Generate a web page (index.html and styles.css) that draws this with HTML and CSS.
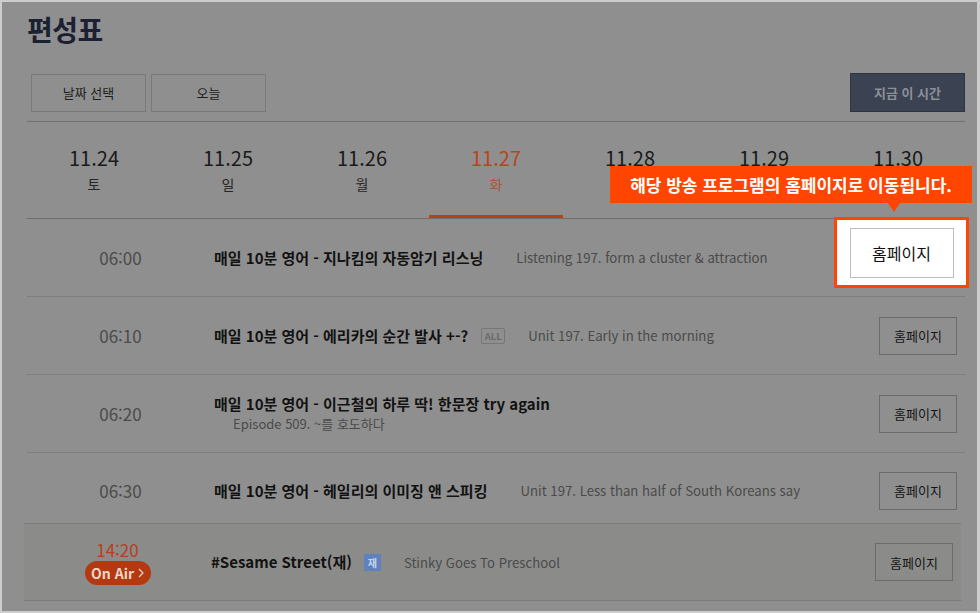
FILE: index.html
```html
<!DOCTYPE html>
<html lang="ko">
<head>
<meta charset="utf-8">
<title>편성표</title>
<link rel="stylesheet" href="styles.css">
</head>
<body>
<div class="frame">
  <div class="page">
    <h1 class="title">편성표</h1>
    <div class="toolbar">
      <div class="toolbar-left">
        <button class="tool-btn">날짜 선택</button>
        <button class="tool-btn">오늘</button>
      </div>
      <button class="now-btn">지금 이 시간</button>
    </div>
    <ul class="dates">
      <li class="date"><span class="date-num">11.24</span><span class="date-day">토</span></li>
      <li class="date"><span class="date-num">11.25</span><span class="date-day">일</span></li>
      <li class="date"><span class="date-num">11.26</span><span class="date-day">월</span></li>
      <li class="date active"><span class="date-num">11.27</span><span class="date-day">화</span></li>
      <li class="date"><span class="date-num">11.28</span><span class="date-day">수</span></li>
      <li class="date"><span class="date-num">11.29</span><span class="date-day">목</span></li>
      <li class="date"><span class="date-num">11.30</span><span class="date-day">금</span></li>
    </ul>
    <ul class="schedule">
      <li class="row">
        <div class="time">06:00</div>
        <div class="info">
          <div class="line"><strong class="prog">매일 10분 영어 - 지나킴의 자동암기 리스닝</strong><span class="desc">Listening 197. form a cluster &amp; attraction</span></div>
        </div>
        <button class="home-btn">홈페이지</button>
      </li>
      <li class="row">
        <div class="time">06:10</div>
        <div class="info">
          <div class="line"><strong class="prog">매일 10분 영어 - 에리카의 순간 발사 +-?</strong><span class="badge badge-all">ALL</span><span class="desc">Unit 197. Early in the morning</span></div>
        </div>
        <button class="home-btn">홈페이지</button>
      </li>
      <li class="row">
        <div class="time">06:20</div>
        <div class="info">
          <div class="line"><strong class="prog">매일 10분 영어 - 이근철의 하루 딱! 한문장 try again</strong></div>
          <div class="sub">Episode 509. ~를 호도하다</div>
        </div>
        <button class="home-btn">홈페이지</button>
      </li>
      <li class="row row-last">
        <div class="time">06:30</div>
        <div class="info">
          <div class="line"><strong class="prog">매일 10분 영어 - 헤일리의 이미징 앤 스피킹</strong><span class="desc">Unit 197. Less than half of South Koreans say</span></div>
        </div>
        <button class="home-btn">홈페이지</button>
      </li>
      <li class="row row-onair">
        <div class="time time-onair">
          <span>14:20</span>
          <span class="onair">On Air <svg class="onair-arrow" width="6" height="10" viewBox="0 0 6 10"><path d="M1 1 L5 5 L1 9" fill="none" stroke="currentColor" stroke-width="1.2"/></svg></span>
        </div>
        <div class="info">
          <div class="line"><strong class="prog">#Sesame Street(재)</strong><span class="badge badge-re">재</span><span class="desc">Stinky Goes To Preschool</span></div>
        </div>
        <button class="home-btn">홈페이지</button>
      </li>
    </ul>
  </div>

  <div class="tooltip">해당 방송 프로그램의 홈페이지로 이동됩니다.</div>
  <div class="spotlight"><button class="spot-btn">홈페이지</button></div>
</div>
</body>
</html>
```

FILE: styles.css
```css
* { box-sizing: border-box; }
html, body { margin: 0; padding: 0; }
body {
  font-family: "Noto Sans CJK KR", "Noto Sans", sans-serif;
  background: #cfcfcf;
}
ul { list-style: none; margin: 0; padding: 0; }
button { font-family: inherit; cursor: pointer; }

.frame {
  position: relative;
  width: 980px;
  height: 613px;
  border: 2px solid #cdcdcd;
  border-right-width: 3px;
  background: #8f8f8f;
  overflow: hidden;
}

.page {
  padding: 0 12px 0 25px;
}

.title {
  margin: 0;
  padding-top: 12px;
  font-size: 28px;
  line-height: 30px;
  font-weight: 700;
  color: #1b2133;
  letter-spacing: -0.5px;
}

.toolbar {
  display: flex;
  justify-content: space-between;
  align-items: center;
  margin-top: 29px;
  padding: 0 0 9px 4px;
  border-bottom: 1px solid #707070;
}
.toolbar-left { display: flex; gap: 5px; }
.tool-btn {
  width: 115px;
  height: 38px;
  background: transparent;
  border: 1px solid #7a7a7a;
  font-size: 13px;
  color: #1e1e1e;
  padding: 0;
}
.now-btn {
  width: 115px;
  height: 39px;
  background: #3b4252;
  border: 1px solid #2f3542;
  color: #8b9099;
  font-size: 13px;
  font-weight: 700;
  padding: 0;
}

.dates {
  display: grid;
  grid-template-columns: repeat(7, 1fr);
  border-bottom: 1px solid #6e6e6e;
}
.date {
  display: flex;
  flex-direction: column;
  align-items: center;
  padding: 24px 0 21px;
  border-bottom: 3px solid transparent;
}
.date-num {
  font-size: 20px;
  line-height: 24px;
  color: #1a1a1a;
}
.date-day {
  margin-top: 4px;
  font-size: 14px;
  line-height: 20px;
  color: #262626;
}
.date.active { border-bottom-color: #b3460f; }
.date.active .date-num { color: #b5461a; }
.date.active .date-day { color: #a5583a; }

.row {
  display: flex;
  align-items: center;
  height: 78px;
  border-bottom: 1px solid #7e7e7e;
  padding-right: 8px;
}
.row-last {
  height: 70px;
  border-bottom: none;
  padding-top: 5px;
}
.time {
  width: 187px;
  flex: none;
  text-align: center;
  font-size: 17px;
  color: #4b4b4b;
}
.info {
  flex: 1;
  min-width: 0;
}
.line {
  display: flex;
  align-items: center;
  white-space: nowrap;
}
.prog {
  font-size: 15px;
  font-weight: 700;
  color: #121212;
  line-height: 20px;
}
.desc {
  margin-left: 33px;
  font-size: 13.2px;
  color: #4a4a4a;
}
.badge + .desc { margin-left: 23px; }
.badge {
  display: inline-flex;
  align-items: center;
  justify-content: center;
  margin-left: 13px;
  font-size: 10px;
  font-weight: 700;
}
.badge-all {
  width: 24px;
  height: 16px;
  border: 1px solid #777;
  border-radius: 2px;
  color: #6b6b6b;
  font-size: 9.5px;
}
.badge-re {
  width: 17px;
  height: 17px;
  margin-left: 12px;
  background: #5d82be;
  color: #c9d5ea;
}
.sub {
  margin: 1px 0 0 19px;
  font-size: 13px;
  line-height: 18px;
  color: #4a4a4a;
}
.home-btn {
  width: 78px;
  height: 38px;
  flex: none;
  background: transparent;
  border: 1px solid #6b6b6b;
  font-size: 13px;
  color: #141414;
  padding: 0;
}

.row-onair {
  height: 78px;
  margin: 0 4px 0 -3px;
  background: #8b8c8a;
  border-top: 1px solid #7b7b7b;
  border-bottom: 1px solid #7b7b7b;
}
.time-onair {
  display: flex;
  flex-direction: column;
  align-items: center;
  color: #b63f1c;
  font-size: 17px;
  line-height: 22px;
}
.onair {
  display: inline-flex;
  align-items: center;
  justify-content: center;
  gap: 4px;
  width: 66px;
  height: 24px;
  border-radius: 12px;
  background: #b33a10;
  color: #efd6cb;
  font-size: 14px;
  font-weight: 700;
  line-height: 1;
}
.onair-arrow { color: #efd6cb; }

.tooltip {
  position: absolute;
  left: 608px;
  top: 164px;
  width: 362px;
  height: 37px;
  background: #ff4500;
  color: #fff;
  font-size: 17px;
  font-weight: 700;
  line-height: 37px;
  text-align: center;
  z-index: 3;
}
.tooltip::after {
  content: "";
  position: absolute;
  left: 278px;
  top: 37px;
  border-left: 6px solid transparent;
  border-right: 6px solid transparent;
  border-top: 9px solid #ff4500;
}

.spotlight {
  position: absolute;
  left: 832px;
  top: 215px;
  width: 135px;
  height: 71px;
  border: 3px solid #ff4500;
  background: #fff;
  display: flex;
  align-items: center;
  justify-content: center;
  z-index: 2;
}
.spot-btn {
  width: 104px;
  height: 50px;
  background: #fff;
  border: 1px solid #bdbdbd;
  font-size: 16px;
  color: #111;
  padding: 0;
}
```
